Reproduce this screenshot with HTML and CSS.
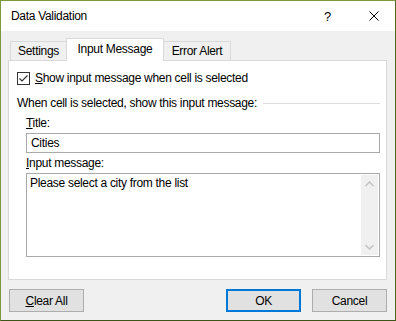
FILE: index.html
```html
<!DOCTYPE html>
<html>
<head>
<meta charset="utf-8">
<link rel="stylesheet" href="styles.css">
</head>
<body>
<div class="window">
  <div class="titlebar">
    <span class="title">Data Validation</span>
    <span class="help">?</span>
    <span class="close"><svg width="10" height="10" viewBox="0 0 10 10"><path d="M0.5 0.5 L9.5 9.5 M9.5 0.5 L0.5 9.5" stroke="#000" stroke-width="1" fill="none"/></svg></span>
  </div>
  <div class="content">
    <div class="tabs">
      <div class="tab tab-settings">Settings</div>
      <div class="tab tab-input active">Input Message</div>
      <div class="tab tab-error">Error Alert</div>
    </div>
    <div class="panel">
      <div class="check-row">
        <span class="checkbox"><svg width="11" height="11" viewBox="0 0 11 11"><path d="M1.5 5.5 L4 8 L9.5 2.5" stroke="#333" stroke-width="1.2" fill="none"/></svg></span>
        <span class="label"><u>S</u>how input message when cell is selected</span>
      </div>
      <div class="group-row">
        <span class="label">When cell is selected, show this input message:</span>
        <span class="sep"></span>
      </div>
      <div class="field">
        <div class="label field-label"><u>T</u>itle:</div>
        <div class="input">Cities</div>
        <div class="label field-label msg-label"><u>I</u>nput message:</div>
        <div class="textarea">
          <span class="ta-text">Please select a city from the list</span>
          <span class="scrollbar">
            <svg width="9" height="6" viewBox="0 0 9 6"><path d="M0.5 5 L4.5 1 L8.5 5" stroke="#c2c2c2" stroke-width="1.5" fill="none"/></svg>
            <svg width="9" height="6" viewBox="0 0 9 6"><path d="M0.5 1 L4.5 5 L8.5 1" stroke="#c2c2c2" stroke-width="1.5" fill="none"/></svg>
          </span>
        </div>
      </div>
    </div>
    <div class="buttons">
      <button class="btn"><u>C</u>lear All</button>
      <span class="spacer"></span>
      <button class="btn btn-default">OK</button>
      <button class="btn">Cancel</button>
    </div>
  </div>
</div>
</body>
</html>
```

FILE: styles.css
```css
html, body {
  margin: 0;
  padding: 0;
}
body {
  font-family: "Liberation Sans", Arial, sans-serif;
  font-size: 12px;
  letter-spacing: -0.3px;
  color: #000;
}
.window {
  width: 396px;
  height: 321px;
  box-sizing: border-box;
  border: 1px solid #7c9a3c;
  border-right-color: #4d6a1f;
  border-bottom-color: #3c5418;
  background: #f0f0f0;
  display: flex;
  flex-direction: column;
}
.titlebar {
  height: 30px;
  background: #fff;
  display: flex;
  align-items: center;
  padding-left: 10px;
  flex-shrink: 0;
}
.title {
  flex: 1;
  font-size: 12px;
}
.help {
  width: 8px;
  margin-right: 37px;
  font-size: 13px;
}
.close {
  width: 10px;
  height: 10px;
  margin-right: 16px;
  display: flex;
}
.content {
  flex: 1;
  padding: 7px 8px 0 7px;
  display: flex;
  flex-direction: column;
}
.tabs {
  display: flex;
  align-items: flex-end;
  height: 22px;
  margin-left: 2px;
}
.tab {
  box-sizing: border-box;
  height: 19px;
  border: 1px solid #d9d9d9;
  border-bottom: none;
  background: #f0f0f0;
  display: flex;
  align-items: center;
  justify-content: center;
}
.tab-settings {
  width: 57px;
}
.tab-input {
  width: 98px;
  margin-left: -1px;
}
.tab-error {
  width: 68px;
  margin-left: -1px;
}
.tab.active {
  height: 23px;
  background: #fff;
  margin-bottom: -1px;
  position: relative;
  z-index: 1;
  padding-bottom: 2px;
}
.panel {
  box-sizing: border-box;
  height: 220px;
  border: 1px solid #d9d9d9;
  background: #fff;
  padding: 0 6px 0 8px;
  display: flex;
  flex-direction: column;
}
.check-row {
  display: flex;
  align-items: center;
  margin-top: 11px;
  height: 13px;
}
.checkbox {
  box-sizing: border-box;
  width: 13px;
  height: 13px;
  border: 1px solid #333;
  display: flex;
  margin-right: 5px;
}
.label {
  line-height: 15px;
  white-space: nowrap;
}
.group-row {
  display: flex;
  align-items: center;
  margin-top: 11px;
}
.sep {
  flex: 1;
  height: 1px;
  background: #dcdcdc;
  margin-left: 6px;
}
.field {
  margin-left: 9px;
  display: flex;
  flex-direction: column;
}
.field-label {
  margin-top: 5px;
}
.input {
  box-sizing: border-box;
  height: 20px;
  margin-top: 2px;
  border: 1px solid #a9a9a9;
  padding-left: 4px;
  display: flex;
  align-items: center;
}
.msg-label {
  margin-top: 3px;
}
.textarea {
  box-sizing: border-box;
  height: 84px;
  margin-top: 2px;
  border: 1px solid #a9a9a9;
  display: flex;
  padding: 1px 1px 1px 3px;
}
.ta-text {
  flex: 1;
  line-height: 15px;
  padding-top: 1px;
}
.scrollbar {
  width: 17px;
  background: #f0f0f0;
  display: flex;
  flex-direction: column;
  align-items: center;
  justify-content: space-between;
  padding: 6px 0 5px;
}
.buttons {
  display: flex;
  margin-top: 9px;
}
.spacer {
  flex: 1;
}
.btn {
  box-sizing: border-box;
  width: 75px;
  height: 23px;
  margin: 0;
  padding: 0;
  border: 1px solid #adadad;
  background: #e1e1e1;
  font-family: "Liberation Sans", Arial, sans-serif;
  font-size: 12px;
  letter-spacing: -0.3px;
  color: #000;
  margin-left: 1px;
}
.btn-default {
  border: 2px solid #0078d7;
  margin-right: 10px;
}
```
